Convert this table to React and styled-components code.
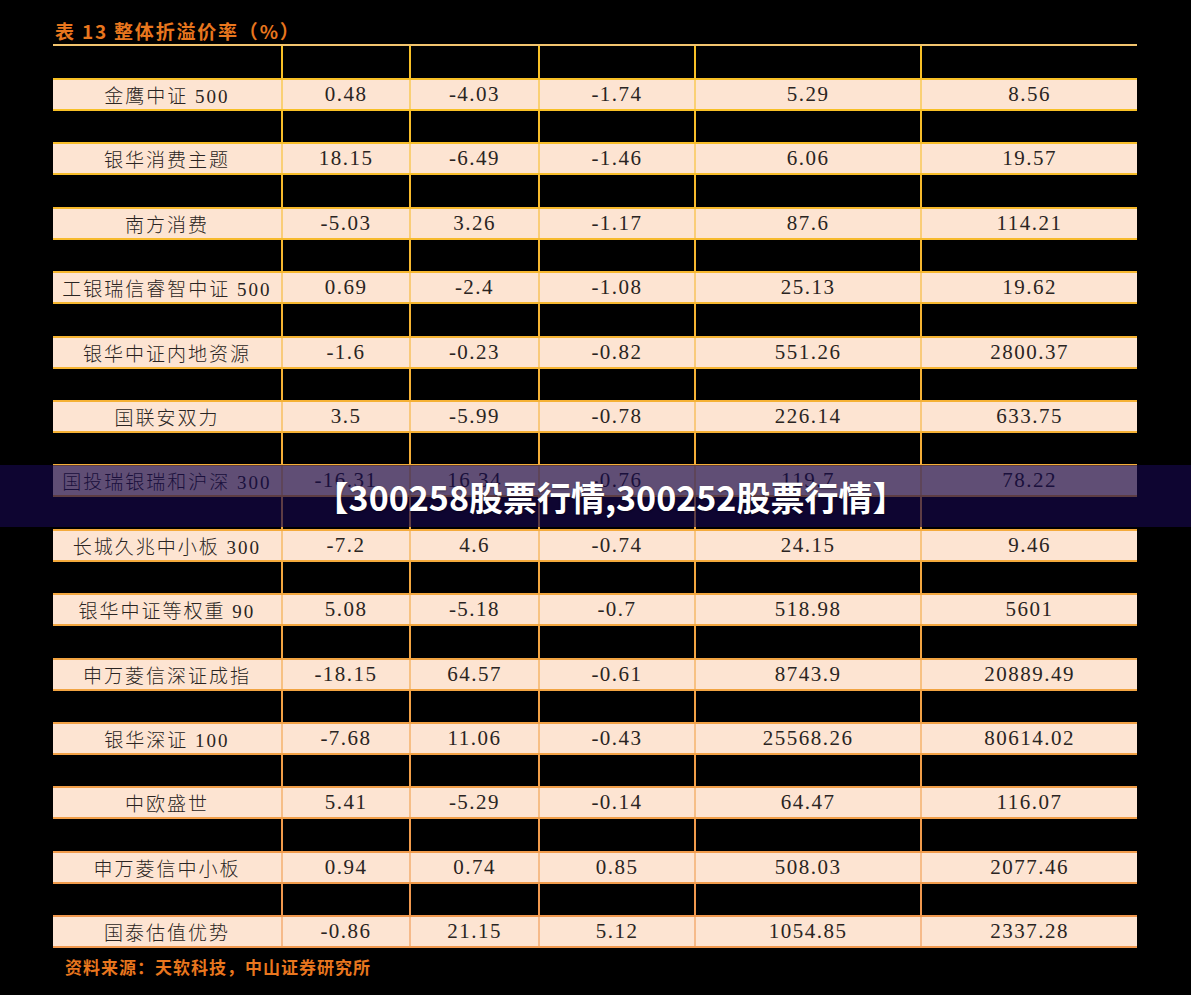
import React from 'react'
import styled, { createGlobalStyle } from 'styled-components'

const GlobalStyle = createGlobalStyle`
  html, body {
    margin: 0;
    padding: 0;
    background: #000;
  }
  * {
    box-sizing: border-box;
  }
`

const COLS = '228px 128px 129px 156px 226px 217px'

const rows = [
  ['金鹰中证 500', '0.48', '-4.03', '-1.74', '5.29', '8.56'],
  ['银华消费主题', '18.15', '-6.49', '-1.46', '6.06', '19.57'],
  ['南方消费', '-5.03', '3.26', '-1.17', '87.6', '114.21'],
  ['工银瑞信睿智中证 500', '0.69', '-2.4', '-1.08', '25.13', '19.62'],
  ['银华中证内地资源', '-1.6', '-0.23', '-0.82', '551.26', '2800.37'],
  ['国联安双力', '3.5', '-5.99', '-0.78', '226.14', '633.75'],
  ['国投瑞银瑞和沪深 300', '-16.31', '16.34', '-0.76', '119.7', '78.22'],
  ['长城久兆中小板 300', '-7.2', '4.6', '-0.74', '24.15', '9.46'],
  ['银华中证等权重 90', '5.08', '-5.18', '-0.7', '518.98', '5601'],
  ['申万菱信深证成指', '-18.15', '64.57', '-0.61', '8743.9', '20889.49'],
  ['银华深证 100', '-7.68', '11.06', '-0.43', '25568.26', '80614.02'],
  ['中欧盛世', '5.41', '-5.29', '-0.14', '64.47', '116.07'],
  ['申万菱信中小板', '0.94', '0.74', '0.85', '508.03', '2077.46'],
  ['国泰估值优势', '-0.86', '21.15', '5.12', '1054.85', '2337.28'],
]

// lines drift from gold at the top to orange at the bottom
const lineColor = (i, n) => {
  const t = i / (n - 1)
  const from = [248, 192, 38]
  const to = [240, 152, 78]
  const c = from.map((v, k) => Math.round(v + (to[k] - v) * t))
  return `rgb(${c.join(',')})`
}

const Page = styled.div`
  position: relative;
  width: 1191px;
  height: 995px;
  background: #000;
  padding: 17px 54px 0 53px;
`

const Title = styled.div`
  height: 27px;
  line-height: 27px;
  padding-left: 2px;
  font-family: 'Noto Sans CJK SC', sans-serif;
  font-weight: 700;
  font-size: 19px;
  letter-spacing: 1.8px;
  color: #e8761e;
`

const Table = styled.div`
  width: 1084px;
  border-top: 2px solid #f2c46e;
`

const Gap = styled.div`
  display: grid;
  grid-template-columns: ${COLS};
  height: ${(p) => p.$h}px;
`

const GapCell = styled.div`
  border-left: 2px solid ${(p) => p.$line};
  &:first-child {
    border-left: none;
  }
`

const DataRow = styled.div`
  display: grid;
  grid-template-columns: ${COLS};
  height: 33px;
  background: #fde4d2;
  border-top: 2px solid ${(p) => p.$line};
  border-bottom: 2px solid ${(p) => p.$line};
`

const Cell = styled.div`
  display: flex;
  align-items: center;
  justify-content: center;
  border-left: 2px solid ${(p) => p.$line};
  color: #2a2422;
  font-family: ${(p) =>
    p.$name
      ? "'Liberation Serif', 'Noto Sans CJK SC', serif"
      : "'Liberation Serif', serif"};
  font-size: ${(p) => (p.$name ? '19px' : '21px')};
  letter-spacing: ${(p) => (p.$name ? '2px' : '1.5px')};
  font-weight: ${(p) => (p.$name ? 300 : 400)};
  white-space: nowrap;
  &:first-child {
    border-left: none;
  }
`

const Source = styled.div`
  margin-top: 6px;
  padding-left: 12px;
  font-family: 'Noto Sans CJK SC', sans-serif;
  font-weight: 700;
  font-size: 17px;
  letter-spacing: 1px;
  color: #e8761e;
`

const Banner = styled.div`
  position: absolute;
  left: 0;
  right: 0;
  top: 465px;
  height: 62px;
  background: rgba(20, 8, 72, 0.68);
  display: flex;
  align-items: center;
  justify-content: center;
  padding-left: 30px;
  font-family: 'Noto Sans CJK SC', sans-serif;
  font-weight: 700;
  font-size: 34px;
  color: #fff;
  text-shadow: 0 1px 2px rgba(0, 0, 0, 0.4);
`

export default function App() {
  return (
    <>
      <GlobalStyle />
      <Page>
        <Title>表 13 整体折溢价率（%）</Title>
        <Table>
          {rows.map((r, i) => {
            const line = lineColor(i, rows.length)
            const soft = line.replace('rgb', 'rgba').replace(')', ',0.55)')
            return (
              <React.Fragment key={i}>
                <Gap $h={i === 0 ? 32 : 31.4}>
                  {r.map((_, k) => (
                    <GapCell key={k} $line={line} />
                  ))}
                </Gap>
                <DataRow $line={line}>
                  {r.map((v, k) => (
                    <Cell key={k} $line={soft} $name={k === 0}>
                      {v}
                    </Cell>
                  ))}
                </DataRow>
              </React.Fragment>
            )
          })}
        </Table>
        <Source>资料来源：天软科技，中山证券研究所</Source>
        <Banner>【300258股票行情,300252股票行情】</Banner>
      </Page>
    </>
  )
}
